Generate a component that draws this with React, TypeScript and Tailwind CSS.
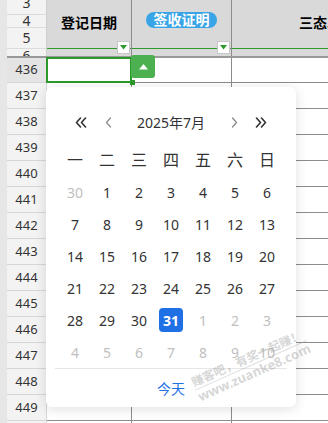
import React from "react";

const weekdays = ["一", "二", "三", "四", "五", "六", "日"];

type Day = { n: number; muted?: boolean; selected?: boolean };

const weeks: Day[][] = [
  [{ n: 30, muted: true }, { n: 1 }, { n: 2 }, { n: 3 }, { n: 4 }, { n: 5 }, { n: 6 }],
  [{ n: 7 }, { n: 8 }, { n: 9 }, { n: 10 }, { n: 11 }, { n: 12 }, { n: 13 }],
  [{ n: 14 }, { n: 15 }, { n: 16 }, { n: 17 }, { n: 18 }, { n: 19 }, { n: 20 }],
  [{ n: 21 }, { n: 22 }, { n: 23 }, { n: 24 }, { n: 25 }, { n: 26 }, { n: 27 }],
  [{ n: 28 }, { n: 29 }, { n: 30 }, { n: 31, selected: true }, { n: 1, muted: true }, { n: 2, muted: true }, { n: 3, muted: true }],
  [4, 5, 6, 7, 8, 9, 10].map((n) => ({ n, muted: true })),
];

const bodyRows = [436, 437, 438, 439, 440, 441, 442, 443, 444, 445, 446, 447, 448, 449, 450];

function FilterBtn() {
  return (
    <div className="absolute right-[1px] top-[41px] w-[13px] h-[13px] bg-white border border-[#c8c8c8] flex items-center justify-center z-10">
      <svg width="7" height="5" viewBox="0 0 7 5">
        <path d="M0 0 L7 0 L3.5 4.5 Z" fill="#2e9a2e" />
      </svg>
    </div>
  );
}

function DoubleChevron({ dir }: { dir: "l" | "r" }) {
  return (
    <svg width="12" height="11" viewBox="0 0 12 11" fill="none" stroke="#333" strokeWidth="1.6" strokeLinecap="round" strokeLinejoin="round">
      {dir === "l" ? (
        <>
          <path d="M5.5 1 L1.5 5.5 L5.5 10" />
          <path d="M10.5 1 L6.5 5.5 L10.5 10" />
        </>
      ) : (
        <>
          <path d="M1.5 1 L5.5 5.5 L1.5 10" />
          <path d="M6.5 1 L10.5 5.5 L6.5 10" />
        </>
      )}
    </svg>
  );
}

function Chevron({ dir }: { dir: "l" | "r" }) {
  return (
    <svg width="7" height="11" viewBox="0 0 7 11" fill="none" stroke="#8c8c8c" strokeWidth="1.3" strokeLinecap="round" strokeLinejoin="round">
      {dir === "l" ? <path d="M5.5 1 L1.5 5.5 L5.5 10" /> : <path d="M1.5 1 L5.5 5.5 L1.5 10" />}
    </svg>
  );
}

export default function App() {
  return (
    <div className="w-[328px] h-[423px] overflow-hidden relative bg-white flex font-['Noto_Sans','Noto_Sans_CJK_SC',sans-serif]">
      {/* left strip */}
      <div className="w-[7px] shrink-0 bg-[#e6e6e6]" />
      <div className="flex-1 flex flex-col">
        {/* header block */}
        <div className="h-[56px] flex shrink-0">
          <div className="w-[40px] shrink-0 bg-[#f3f3f3] border-r border-[#d0d0d0] flex flex-col text-[14px] text-[#333]">
            <div className="h-[15px] border-b border-[#dcdcdc] flex justify-center overflow-hidden">
              <span className="leading-[16px] -mt-[5px]">3</span>
            </div>
            <div className="h-[13px] border-b border-[#dcdcdc] flex justify-center items-center overflow-hidden">
              <span className="leading-[16px] -mt-[1px]">4</span>
            </div>
            <div className="h-[21px] border-b border-[#dcdcdc] flex justify-center items-center overflow-hidden">
              <span className="leading-[16px]">5</span>
            </div>
            <div className="h-[7px] flex justify-center overflow-hidden">
              <span className="leading-[16px] mt-[-1px]">6</span>
            </div>
          </div>
          <div className="flex-1 flex bg-[#d9d9d9]">
            <div className="w-[85px] shrink-0 border-r border-[#8c8c8c] flex flex-col relative">
              <div className="h-[48px] flex items-center justify-center pb-[3px] text-[14px] font-bold text-black">登记日期</div>
              <div className="h-[1px] bg-[#2e9a2e]" />
              <FilterBtn />
            </div>
            <div className="w-[100px] shrink-0 border-r border-[#8c8c8c] flex flex-col relative">
              <div className="h-[48px] flex justify-center pt-[12px]">
                <div className="h-[16px] w-[71px] rounded-full bg-[#3aa5e6] text-white text-[14px] font-bold leading-[16px] flex items-center justify-center">签收证明</div>
              </div>
              <div className="h-[1px] bg-[#2e9a2e]" />
              <FilterBtn />
            </div>
            <div className="flex-1 flex flex-col overflow-hidden">
              <div className="h-[48px] flex items-center pb-[3px] pl-[67px] text-[14px] font-bold text-black whitespace-nowrap">三态单号</div>
              <div className="h-[1px] bg-[#2e9a2e]" />
            </div>
          </div>
        </div>
        {/* frozen divider */}
        <div className="h-[2px] bg-[#999] shrink-0" />
        {/* body rows */}
        {bodyRows.map((r, i) => (
          <div key={r} className={`flex shrink-0 ${i === 0 ? "h-[25px]" : "h-[26px]"}`}>
            <div
              className={`w-[40px] shrink-0 border-r border-b border-[#d6d6d6] flex items-center justify-center text-[13px] text-[#333] ${
                i === 0 ? "bg-[#e4e4e4]" : "bg-[#f3f3f3]"
              }`}
            >
              {r}
            </div>
            <div className="w-[85px] shrink-0 border-r border-b border-[#8c8c8c]" />
            <div className="w-[100px] shrink-0 border-r border-b border-[#8c8c8c]" />
            <div className="flex-1 border-b border-[#8c8c8c]" />
          </div>
        ))}
      </div>

      {/* selected cell */}
      <div className="absolute left-[46px] top-[57px] w-[86px] h-[26px] border-2 border-[#2b9a2b]" />
      <div className="absolute left-[130px] top-[80px] w-[5px] h-[5px] bg-[#2b9a2b]" />
      {/* dropdown toggle */}
      <div className="absolute left-[131px] top-[55px] w-[24px] h-[23px] rounded-[3px] bg-[#4caf50] flex items-center justify-center">
        <svg width="9" height="6" viewBox="0 0 9 6">
          <path d="M0 5.5 L9 5.5 L4.5 0 Z" fill="#fff" />
        </svg>
      </div>

      {/* calendar popup */}
      <div className="absolute left-[46px] top-[87px] w-[250px] h-[320px] bg-white rounded-[6px] shadow-[0_2px_12px_rgba(0,0,0,0.13)] px-[9px] pt-[19px] flex flex-col">
        <div className="h-[32px] flex items-center">
          <div className="w-[16px]" />
          <div className="w-[20px] flex justify-center">
            <DoubleChevron dir="l" />
          </div>
          <div className="w-[7px]" />
          <div className="w-[20px] flex justify-center">
            <Chevron dir="l" />
          </div>
          <div className="flex-1 text-center text-[14px] text-[#333]">2025年7月</div>
          <div className="w-[20px] flex justify-center">
            <Chevron dir="r" />
          </div>
          <div className="w-[7px]" />
          <div className="w-[20px] flex justify-center">
            <DoubleChevron dir="r" />
          </div>
          <div className="w-[16px]" />
        </div>
        <div className="px-[4px] mt-[6px]">
          <div className="grid grid-cols-7">
            {weekdays.map((w) => (
              <div key={w} className="h-[32px] flex items-center justify-center text-[16px] text-[#333]">
                {w}
              </div>
            ))}
          </div>
          {weeks.map((wk, wi) => (
            <div key={wi} className="grid grid-cols-7">
              {wk.map((d, di) => (
                <div key={di} className="h-[32px] flex items-center justify-center">
                  {d.selected ? (
                    <div className="w-[24px] h-[24px] rounded-[4px] bg-[#1f6fe5] text-white font-bold text-[14px] flex items-center justify-center">
                      {d.n}
                    </div>
                  ) : (
                    <span className={`text-[14px] ${d.muted ? "text-[#c0c0c0]" : "text-[#333]"}`}>{d.n}</span>
                  )}
                </div>
              ))}
            </div>
          ))}
        </div>
        <div className="h-[1px] bg-[#e6e6e6]" />
        <div className="flex-1 flex items-center justify-center text-[14px] text-[#1f6fe5]">今天</div>
      </div>

      {/* watermark */}
      <div className="absolute left-[189px] top-[376px] -rotate-[24deg] origin-top-left pointer-events-none select-none text-[rgba(150,150,150,0.4)] font-bold leading-[15px]">
        <div className="text-[12px] whitespace-nowrap border-b border-[rgba(160,160,160,0.35)]">赚客吧，有奖一起赚！</div>
        <div className="text-[13px] whitespace-nowrap">www.zuanke8.com</div>
      </div>
    </div>
  );
}
